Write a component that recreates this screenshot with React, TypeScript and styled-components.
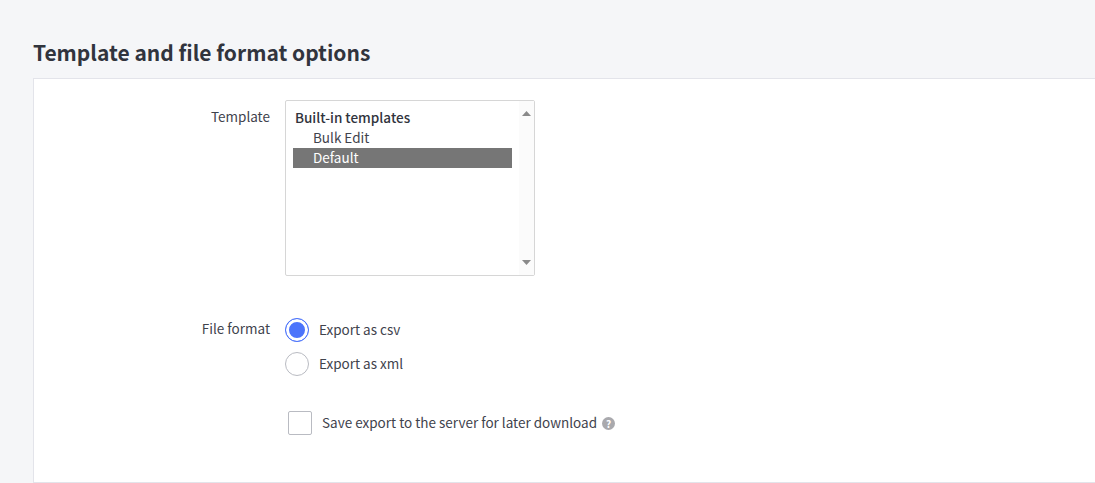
import React from 'react';
import styled, { createGlobalStyle } from 'styled-components';

const GlobalStyle = createGlobalStyle`
  html, body {
    margin: 0;
    height: 100%;
    overflow: hidden;
    background-color: #f5f6f8;
  }
  body {
    font-family: "Noto Sans CJK JP", "Noto Sans", sans-serif;
    font-size: 13.5px;
    color: #363a43;
  }
`;

const App = () => (
  <Page>
    <GlobalStyle />
    <Title>Template and file format options</Title>
    <Card>
      <TemplateRow>
        <TemplateLabel>Template</TemplateLabel>
        <ListBox>
          <ListContent>
            <GroupLabel>Built-in templates</GroupLabel>
            <Option>Bulk Edit</Option>
            <Option selected>Default</Option>
          </ListContent>
          <ScrollTrack>
            <Arrow viewBox="0 0 9 5">
              <path d="M4.5 0L9 5H0z" />
            </Arrow>
            <Arrow viewBox="0 0 9 5">
              <path d="M0 0h9L4.5 5z" />
            </Arrow>
          </ScrollTrack>
        </ListBox>
      </TemplateRow>
      <FormatRow>
        <Label>File format</Label>
        <RadioGroup>
          <RadioRow>
            <Radio checked />
            <ControlText>Export as csv</ControlText>
          </RadioRow>
          <RadioRow>
            <Radio />
            <ControlText>Export as xml</ControlText>
          </RadioRow>
        </RadioGroup>
      </FormatRow>
      <SaveRow>
        <CheckBox />
        <ControlText>Save export to the server for later download</ControlText>
        <HelpIcon>?</HelpIcon>
      </SaveRow>
    </Card>
  </Page>
);

const Page = styled.div`
  display: flex;
  flex-direction: column;
  height: 483px;
  padding-left: 33px;
  box-sizing: border-box;
`;

const Title = styled.h1`
  margin: 0;
  padding-top: 37px;
  height: 41px;
  font-size: 21px;
  line-height: 30px;
  font-weight: 700;
  color: #31343d;
`;

const Card = styled.div`
  flex: 1;
  padding-top: 21px;
  box-sizing: border-box;
  background-color: #ffffff;
  border: 1px solid #e3e4ea;
  border-right: none;
`;

const TemplateRow = styled.div`
  display: flex;
  align-items: flex-start;
  gap: 15px;
`;

const FormatRow = styled(TemplateRow)`
  margin-top: 42px;
`;

const Label = styled.div`
  width: 236px;
  text-align: right;
  line-height: 20px;
  color: #3f434d;
`;

const TemplateLabel = styled(Label)`
  padding-top: 6px;
`;

const ListBox = styled.div`
  display: flex;
  justify-content: space-between;
  width: 250px;
  height: 176px;
  box-sizing: border-box;
  border: 1px solid #d6d6d6;
  border-radius: 2px;
  background-color: #ffffff;
`;

const ListContent = styled.div`
  flex: 1;
  padding: 7px 7px 0 7px;
`;

const GroupLabel = styled.div`
  height: 20px;
  padding-left: 2px;
  line-height: 19px;
  font-weight: 500;
  color: #31343d;
`;

const Option = styled.div<{ selected?: boolean }>`
  height: 20px;
  padding-left: 20px;
  line-height: 19px;
  color: ${(p) => (p.selected ? '#ffffff' : '#3f434d')};
  background-color: ${(p) => (p.selected ? '#767676' : 'transparent')};
`;

const ScrollTrack = styled.div`
  display: flex;
  flex-direction: column;
  justify-content: space-between;
  align-items: center;
  width: 15px;
  padding: 10px 0;
  box-sizing: border-box;
  background-color: #fbfbfb;
`;

const Arrow = styled.svg`
  display: block;
  width: 9px;
  height: 5px;
  fill: #8a8a8a;
`;

const RadioGroup = styled.div`
  display: flex;
  flex-direction: column;
  gap: 10px;
`;

const RadioRow = styled.label`
  display: flex;
  align-items: center;
  gap: 10px;
  height: 24px;
`;

const Radio = styled.span<{ checked?: boolean }>`
  width: 24px;
  height: 24px;
  box-sizing: border-box;
  border-radius: 50%;
  border: ${(p) => (p.checked ? '1.5px solid #4c74fb' : '1px solid #b9bbc2')};
  background-color: ${(p) => (p.checked ? '#4c74fb' : '#ffffff')};
  box-shadow: ${(p) => (p.checked ? 'inset 0 0 0 3px #ffffff' : 'none')};
`;

const ControlText = styled.span`
  margin-top: -2px;
  line-height: 20px;
  color: #3f434d;
`;

const SaveRow = styled.div`
  display: flex;
  align-items: center;
  margin: 35px 0 0 254px;
  height: 24px;
`;

const CheckBox = styled.span`
  width: 24px;
  height: 24px;
  margin-right: 10px;
  box-sizing: border-box;
  border: 1px solid #b9bbc2;
  border-radius: 2px;
  background-color: #ffffff;
`;

const HelpIcon = styled.span`
  display: flex;
  align-items: center;
  justify-content: center;
  width: 13px;
  height: 13px;
  margin: 1px 0 0 5px;
  border-radius: 50%;
  background-color: #a9a9ad;
  color: #ffffff;
  font-size: 10px;
  font-weight: 700;
  line-height: 13px;
`;

export default App;
